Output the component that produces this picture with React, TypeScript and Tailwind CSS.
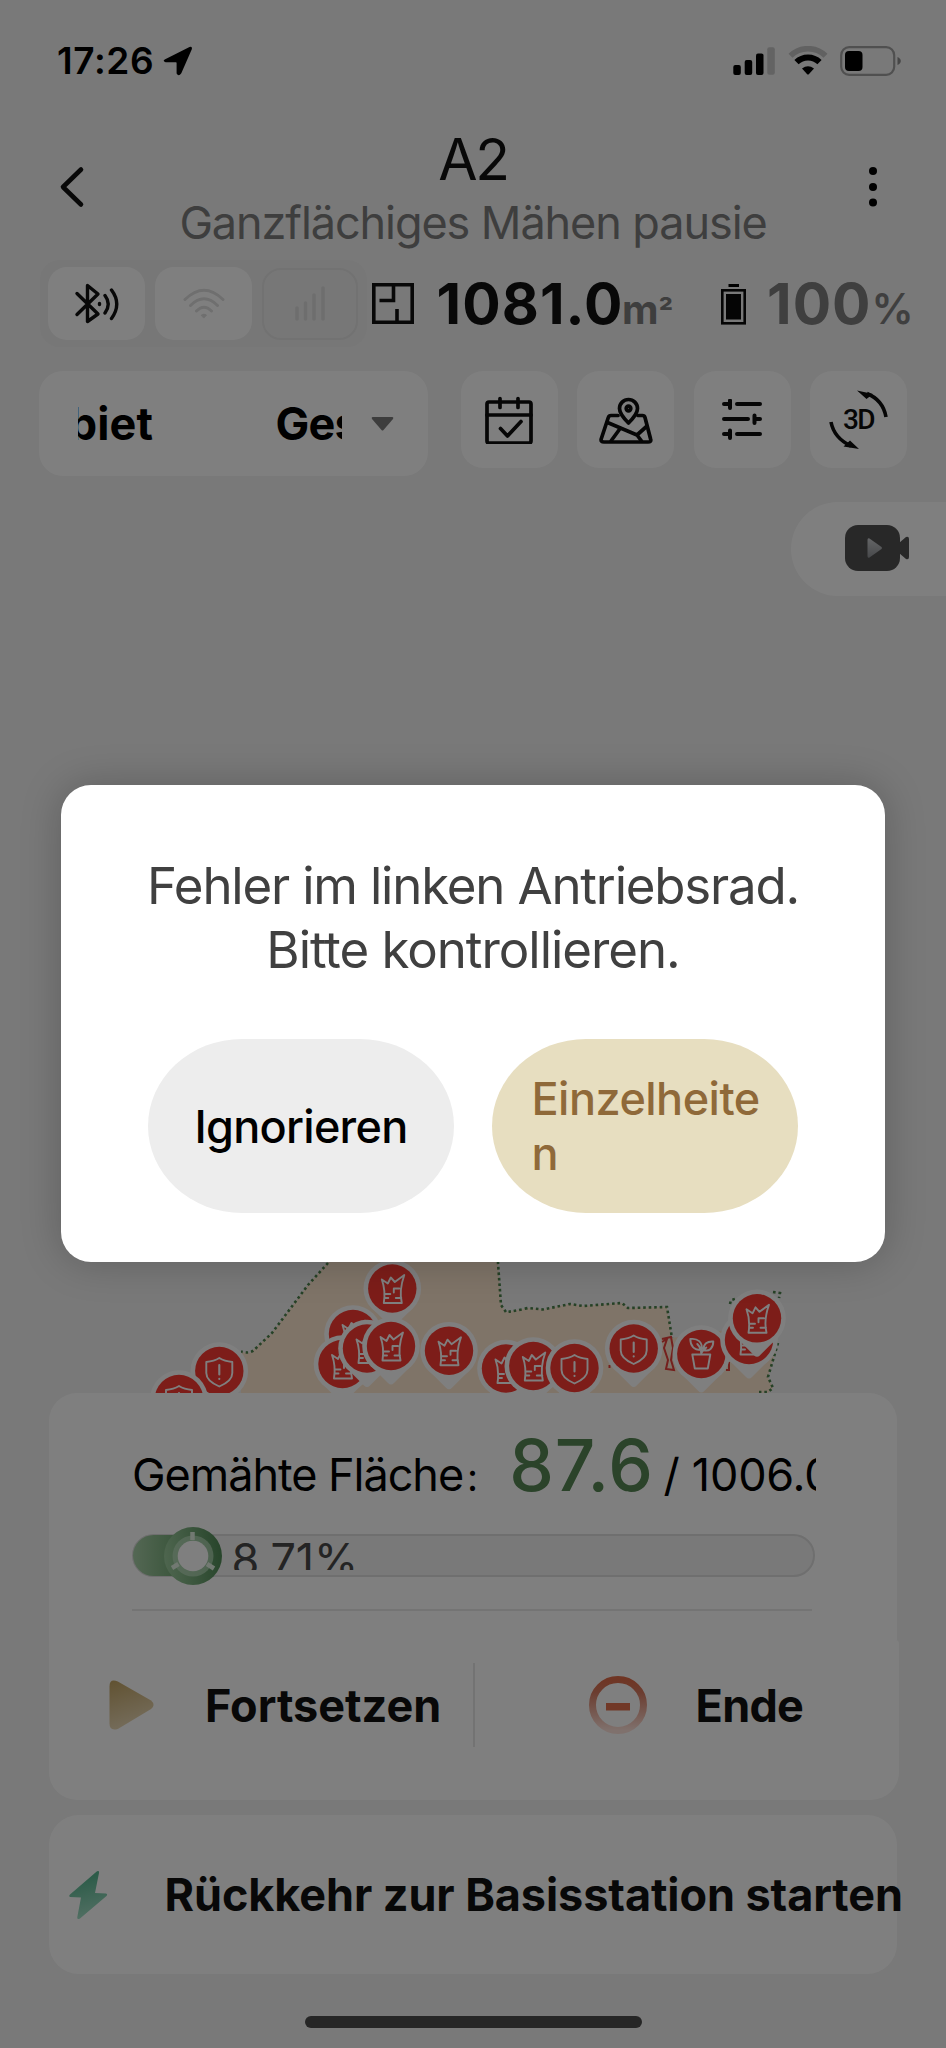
import type { ReactNode } from "react";

type MarkerKind = "grass" | "shield" | "plant";

const markers: { x: number; y: number; kind: MarkerKind }[] = [
  { x: 219.3, y: 1371, kind: "shield" },
  { x: 179, y: 1399, kind: "shield" },
  { x: 392.3, y: 1288.5, kind: "grass" },
  { x: 353, y: 1334, kind: "grass" },
  { x: 342.5, y: 1364, kind: "grass" },
  { x: 367, y: 1348.5, kind: "grass" },
  { x: 391, y: 1346, kind: "grass" },
  { x: 449, y: 1350.7, kind: "grass" },
  { x: 506, y: 1368.5, kind: "grass" },
  { x: 533.3, y: 1366, kind: "grass" },
  { x: 574.5, y: 1368, kind: "shield" },
  { x: 633.7, y: 1348.5, kind: "shield" },
  { x: 701.3, y: 1354, kind: "plant" },
  { x: 749, y: 1340, kind: "grass" },
  { x: 757, y: 1318.3, kind: "grass" },
];

function Marker({ x, y, kind }: { x: number; y: number; kind: MarkerKind }) {
  return (
    <g transform={`translate(${x} ${y})`}>
      <path d="M-20 20L-3 37Q0 40 3 37L20 20Z" fill="#fff" />
      <circle r="28.8" fill="#fff" />
      <circle r="24.2" fill="#fb3a32" />
      <g fill="none" stroke="#fff" strokeWidth="1.9" strokeLinejoin="round" strokeLinecap="round">
        {kind === "grass" && (
          <path d="M-8.5 14.5Q-6.5 2-10.5-9L-4.5-5L-1.5-11L2.5-6.5L12-13.5Q6.5 2 9.5 14.5ZM7 0H1.5V4M-8 5.5H-2M-8 9.5H-4M9 9.5H3.5" />
        )}
        {kind === "shield" && (
          <>
            <path d="M0-13C4-10.5 8-9.5 13-9V2C13 8.500 7 12.500 0 15.500C-7 12.500-13 8.500-13 2V-9C-8-9.500-4-10.500 0-13Z" />
            <path d="M0-6V3.500M0 7.800V8" strokeWidth="2.100" />
          </>
        )}
        {kind === "plant" && (
          <path d="M-9 0.5H9L6.500 14.500H-6.500ZM0 0C0-4-1-7-4-10M0-1C1-3 2-4 5-6.500M0-4C-8-4-11-9-11-15C-4-16 2-12 0-4ZM2-4C2-10 6-13 12-12.500C12-6 8-2 2-4Z" />
        )}
      </g>
    </g>
  );
}

function LawnMap() {
  const outline =
    "M500 1190L498 1263L501 1305L506 1312Q516 1311 528 1308L543 1309.500L570 1304L583 1306L622 1303L628 1308L667 1307L672 1338";
  return (
    <svg className="h-[797px] w-full shrink-0" viewBox="0 596 946 797">
      <path
        d="M380 1200L328 1262L308 1285L272 1333L250 1353L241 1352V1393H768L773 1388L768 1377L778 1343L760 1325L672 1338L667 1307L628 1308L622 1303L583 1306L570 1304L543 1309.500L528 1308L506 1312L501 1305L498 1263L500 1190Z"
        fill="#ffe8d1"
      />
      <g fill="none" stroke="#4c824c" strokeWidth="2.600" strokeDasharray="2.600 2.900">
        <path d="M328 1263L308 1285L272 1333L254 1350Q250 1354 241 1351.500" />
        <path d={outline} />
        <path d="M778 1343L768 1377L773 1388L768 1392L759 1392" />
        <path d="M730 1304L731 1300L735 1299M773 1292L780 1293L779 1298" />
      </g>
      <g fill="none" stroke="#e8403a" strokeWidth="2">
        <path d="M662 1339L671 1337L673 1348L671 1360L674 1370L666 1369L668 1360L664 1348L667 1339L662 1342M729 1362V1370H726M609.500 1365V1368" />
      </g>
      {markers.map((m, i) => (
        <Marker key={i} {...m} />
      ))}
    </svg>
  );
}

function StatusBar() {
  return (
    <div className="flex h-[121px] shrink-0 items-center pl-[57px] text-black">
      <span className="w-[106px] text-[37px] leading-none font-semibold tracking-[0.6px]">17:26</span>
      <svg className="h-[30px] w-[30px]" viewBox="0 0 30 30">
        <path d="M2.200 13.200L26.500 0.900Q29.500 0.100 28.800 3.200L18.300 27.200Q15.600 31 13.600 27.400V17Q13.600 16.300 13 16.300L2.600 16.200Q-1 14.900 2.200 13.200Z" />
      </svg>
      <svg className="ml-[540px] h-[28px] w-[43px]" viewBox="0 0 43 28">
        <rect x="0.300" y="18" width="7.500" height="10" rx="2" />
        <rect x="11.700" y="13" width="7.500" height="15" rx="2" />
        <rect x="23" y="6.500" width="7.500" height="21.500" rx="2" />
        <rect x="34.300" y="0.300" width="7.500" height="27.500" rx="2" fill="#c6c6c6" />
      </svg>
      <svg className="ml-[12px] h-[30px] w-[40px]" viewBox="0 0 40 30">
        <g fill="none">
          <path d="M2.500 9.800A25 25 0 0 1 37.500 9.800" stroke="#c2c2c2" strokeWidth="5.600" />
          <path d="M8.500 16.200A16.500 16.500 0 0 1 31.500 16.200" stroke="#000" strokeWidth="6" />
        </g>
        <path d="M14 22.500Q20 17.800 26 22.500L20.800 28.200Q20 29 19.200 28.200Z" />
      </svg>
      <svg className="ml-[12px] h-[30px] w-[62px]" viewBox="0 0 62 30">
        <rect x="1.200" y="1.200" width="53" height="27.600" rx="8" fill="none" stroke="#a0a0a0" strokeWidth="2.200" />
        <rect x="5" y="5" width="17.500" height="20" rx="4" />
        <path d="M57.500 11Q60.800 12.500 60.800 15T57.500 19Z" fill="#8c8c8c" />
      </svg>
    </div>
  );
}

function Header() {
  return (
    <div className="flex h-[132px] shrink-0 items-center">
      <svg className="ml-[58px] h-[44px] w-[28px]" viewBox="0 0 28 44">
        <path d="M23 4.500L5 22L23 39.500" fill="none" stroke="#111" strokeWidth="4.600" strokeLinecap="round" strokeLinejoin="round" />
      </svg>
      <div className="ml-[54px] flex w-[666px] flex-col items-center gap-[12px] pt-px leading-none whitespace-nowrap">
        <h1 className="text-[57px] tracking-[-2.3px] text-[#111]">A2</h1>
        <p className="text-[45px] tracking-[-1.08px] text-[#7c7c7c]">Ganzflächiges Mähen pausie</p>
      </div>
      <svg className="ml-[62px] h-[44px] w-[10px]" viewBox="0 0 10 44">
        <circle cx="5" cy="6" r="4" />
        <circle cx="5" cy="22" r="4" />
        <circle cx="5" cy="37.500" r="4" />
      </svg>
    </div>
  );
}

function StatsRow() {
  return (
    <div className="mt-[7px] ml-[40px] flex h-[87px] shrink-0 items-center whitespace-nowrap">
      <div className="flex h-[87px] w-[327px] shrink-0 items-center gap-[10px] rounded-[20px] bg-[#eeeeee] px-[8px]">
        <div className="flex h-[73px] w-[97px] items-center justify-center rounded-[19px] bg-white">
          <svg className="h-[42px] w-[46px]" viewBox="0 0 46 42" fill="none" stroke="#111" strokeWidth="3.400" strokeLinecap="round" strokeLinejoin="round">
            <path d="M3 10.500L24 31L13.500 38.500V2.500L24 11L3 31.500" />
            <path d="M25.500 20.500V21.500M31 12.500Q37.500 21 31 30M37.500 7Q48 21 37.500 35.500" />
          </svg>
        </div>
        <div className="flex h-[73px] w-[97px] items-center justify-center rounded-[19px] bg-white">
          <svg className="h-[32px] w-[42px]" viewBox="0 0 42 32" fill="none" stroke="#dedede" strokeWidth="3" strokeLinecap="round">
            <path d="M2 11.500Q21-7 40 11.500M7.500 17.500Q21 4 34.500 17.500M13.500 23Q21 15.500 28.500 23" />
            <path d="M18.500 27Q21 25.300 23.500 27L21 29.800Z" fill="#dedede" strokeWidth="1" />
          </svg>
        </div>
        <div className="flex h-[72px] w-[96px] items-center justify-center rounded-[19px] border-2 border-[#e4e4e4] bg-[#efefef]">
          <svg className="h-[35px] w-[30px]" viewBox="0 0 30 35" stroke="#dcdcdc" strokeWidth="3.600" strokeLinecap="round">
            <path d="M2 22V33M10.500 17V33M19 9V33M28 2V33" />
          </svg>
        </div>
      </div>
      <svg className="ml-[5px] h-[42px] w-[42px] shrink-0" viewBox="0 0 42 42" fill="none" stroke="#111" strokeWidth="3.600">
        <path d="M1.800 1.800H40.200V39.200H1.800Z" />
        <path d="M21.500 2V17.500H7.500M25 26V39" />
      </svg>
      <div className="ml-[22.500px] flex items-baseline leading-none font-bold">
        <span className="text-[57px] tracking-[1.1px] text-[#111]">1081.0</span>
        <span className="ml-[-1.500px] text-[40px] text-[#7c7c7c]">m</span>
        <span className="w-[14px] text-[32px] text-[#7c7c7c]">²</span>
      </div>
      <svg className="ml-[48px] h-[42px] w-[25px] shrink-0" viewBox="0 0 25 42">
        <path d="M7.500 1H18V4H7.500Z" />
        <rect x="1.300" y="7.300" width="22.400" height="33" fill="none" stroke="#0a0a0a" strokeWidth="2.600" />
        <rect x="5" y="11" width="15" height="25.500" fill="#0a0a0a" />
      </svg>
      <div className="ml-[21.500px] flex items-baseline leading-none font-bold text-[#7e7e7e]">
        <span className="text-[57px] tracking-[1px]">100</span>
        <span className="text-[42px] font-semibold">%</span>
      </div>
    </div>
  );
}

function ToolButton({ children }: { children: ReactNode }) {
  return (
    <button className="flex h-[97px] w-[97px] shrink-0 items-center justify-center rounded-[22px] bg-white">{children}</button>
  );
}

function Toolbar() {
  return (
    <div className="mt-[24px] ml-[39px] flex h-[105px] shrink-0 items-start gap-[19.500px]">
      <div className="mr-[13px] flex h-[105px] w-[389px] shrink-0 items-center rounded-[24px] bg-white pl-[39px]">
        <div className="flex w-[264px] items-center overflow-hidden text-[45px] leading-none font-bold whitespace-nowrap text-black">
          <div className="flex w-[75px] shrink-0 justify-end overflow-hidden py-1">
            <span className="tracking-[0.1px]">biet</span>
          </div>
          <span className="ml-[122.500px] tracking-[-0.8px]">Ges</span>
        </div>
        <svg className="ml-[29px] h-[14px] w-[23px]" viewBox="0 0 23 14">
          <path d="M1.500 0H21.500Q23 0.500 22 2L12.500 13Q11.500 14 10.500 13L1 2Q0 0.500 1.500 0Z" fill="#7a7a7a" />
        </svg>
      </div>
      <ToolButton>
        <svg className="h-[48px] w-[48px]" viewBox="0 0 48 48" fill="none" stroke="#0c0c0c" strokeWidth="3.700" strokeLinecap="round" strokeLinejoin="round">
          <rect x="2" y="6" width="44" height="41" rx="2" />
          <path d="M2 19H46M15 2.500V11.500M33 2.500V11.500M15.500 32.500L22.500 40L36 25.500" />
        </svg>
      </ToolButton>
      <ToolButton>
        <svg className="h-[48px] w-[54px]" viewBox="0 0 54 48" fill="none" stroke="#0c0c0c" strokeWidth="3.700" strokeLinejoin="round" strokeLinecap="round">
          <path d="M19 19.500H12Q10 19.500 9.300 21.500L2.200 43Q1.500 46 5 46H49Q52.500 46 51.600 43L46 21.500Q45.400 19.500 43.500 19.500H39" />
          <path d="M29.500 27Q20.500 18 20.500 12.500A9 9 0 0 1 38.500 12.500Q38.500 18 29.500 27Z" />
          <circle cx="29.500" cy="12.500" r="2.300" />
          <path d="M8.500 26.500L38 39L47.500 30.500M21.500 32L12 45M38 39L42.500 45" />
        </svg>
      </ToolButton>
      <ToolButton>
        <svg className="h-[42px] w-[40px]" viewBox="0 0 40 42" stroke="#0c0c0c" strokeWidth="4" strokeLinecap="round">
          <path d="M2 5H7M15 5H38M8 1.500V9M2 20H26M34 20H38M32.500 16.500V24M2 35H7M15 35H38M8 31.500V39" />
        </svg>
      </ToolButton>
      <ToolButton>
        <div className="relative flex h-[60px] w-[60px] items-center justify-center">
          <svg className="absolute inset-0 h-[60px] w-[60px]" viewBox="0 0 60 60" fill="none" stroke="#0c0c0c" strokeWidth="3.600">
            <path d="M38 3.500Q54 10 57 27M2 32Q5 48 22 56" />
            <path d="M28 0.500L44 4L37.500 9ZM30 59L14.500 56.500L21 50.500Z" fill="#0c0c0c" stroke="none" />
          </svg>
          <span className="font-['Roboto'] text-[28px] leading-none font-medium tracking-[-1.5px] text-[#0c0c0c]">3D</span>
        </div>
      </ToolButton>
    </div>
  );
}

function VideoTab() {
  return (
    <div className="mt-[26px] flex h-[94px] w-[155px] shrink-0 items-center self-end rounded-l-full bg-white pl-[54px]">
      <svg className="mb-[2px] h-[46px] w-[64px]" viewBox="0 0 64 46">
        <defs>
          <linearGradient id="play" x1="0" y1="0" x2="0" y2="1">
            <stop offset="0" stopColor="#c9cbce" />
            <stop offset="1" stopColor="#8f9296" />
          </linearGradient>
        </defs>
        <path d="M54 18L61 12Q64 11 64 14V32Q64 35 61 34L54 28Z" fill="#505050" />
        <rect width="55" height="46" rx="13" fill="#505050" />
        <path d="M22.500 15Q22.500 12.500 24.500 13.500L36.500 22Q37.500 23 36.500 24L24.500 32.500Q22.500 33.500 22.500 31Z" fill="url(#play)" />
      </svg>
    </div>
  );
}

function ProgressCard() {
  return (
    <section className="ml-[49px] shrink-0">
      <div className="h-[247px] w-[848px] rounded-t-[28px] bg-white px-[83px] pt-[37px]">
        <div className="flex h-[71px] w-[684px] items-baseline overflow-hidden leading-none whitespace-nowrap text-black">
          <span className="text-[45px] tracking-[-1.03px]">Gemähte Fläche</span>
          <span className="w-[46px] shrink-0 pl-[4px] font-['Noto_Sans_CJK_SC',sans-serif] text-[38px] leading-none">:</span>
          <span className="text-[71px] font-medium tracking-[1px] text-[#568654]">87.6</span>
          <span className="ml-[9.500px] text-[45px] tracking-[-0.2px]">/ 1006.0</span>
        </div>
        <div className="relative mt-[33px] h-[43px] w-[683px] rounded-full border-2 border-[#dedede] bg-[#f2f2f2]">
          <div className="absolute -top-px -left-px h-[41px] w-[62px] rounded-l-full bg-linear-to-r from-[#a8cfa8] to-[#5f9c63]" />
          <div className="absolute top-[1px] left-[97.500px] h-[33px] overflow-hidden text-[45px] leading-none tracking-[-0.1px] text-[#484848]">8.71%</div>
          <svg className="absolute top-[-10.500px] left-[28.500px] h-[60px] w-[60px]" viewBox="0 0 60 60">
            <defs>
              <linearGradient id="knob" x1="0" y1="0.500" x2="1" y2="0.400">
                <stop offset="0" stopColor="#9ccb9d" />
                <stop offset="1" stopColor="#4f8a56" />
              </linearGradient>
            </defs>
            <circle cx="30" cy="30" r="29" fill="url(#knob)" />
            <circle cx="30" cy="30" r="20.500" fill="#bfe0c1" opacity="0.650" />
            <circle cx="30" cy="30" r="15.300" fill="#fff" />
            <path d="M29.500 6V14M9 42L15.500 38M51 42.500L44 38" stroke="#e4f2e4" strokeWidth="4.500" />
          </svg>
        </div>
        <div className="mt-[32px] h-[2px] w-[680px] bg-[#e9e9e9]" />
      </div>
      <div className="flex h-[160px] w-[850px] items-start rounded-tr-[4px] rounded-b-[28px] bg-white pt-[23px] text-[45px] leading-none font-bold whitespace-nowrap text-[#111]">
        <button className="flex h-[84px] w-[426px] items-center border-r-2 border-[#e6e6e6] pl-[59.500px]">
          <svg className="h-[52px] w-[46px]" viewBox="0 0 47 52">
            <defs>
              <linearGradient id="resume" x1="0" y1="0" x2="0.300" y2="1">
                <stop offset="0" stopColor="#c2a463" />
                <stop offset="1" stopColor="#ead9b6" />
              </linearGradient>
            </defs>
            <path d="M0.500 7Q0.500-1.500 9 2L43 21.500Q48 26 43 30L9 50.500Q0.500 53 0.500 45Z" fill="url(#resume)" />
          </svg>
          <span className="ml-[50.500px]">Fortsetzen</span>
        </button>
        <button className="flex h-[84px] items-center pl-[114px]">
          <svg className="h-[58px] w-[58px]" viewBox="0 0 58 58">
            <defs>
              <linearGradient id="stop" x1="0" y1="0" x2="0" y2="1">
                <stop offset="0" stopColor="#de6b48" />
                <stop offset="0.250" stopColor="#d77a60" />
                <stop offset="1" stopColor="#ffe2da" />
              </linearGradient>
            </defs>
            <circle cx="29" cy="29" r="25.500" fill="none" stroke="url(#stop)" strokeWidth="7" />
            <path d="M17 27H41V34.500H17Z" fill="#e2704e" />
          </svg>
          <span className="ml-[48.500px] tracking-[-0.7px]">Ende</span>
        </button>
      </div>
    </section>
  );
}

function ReturnCard() {
  return (
    <button className="mt-[15px] ml-[49px] flex h-[159px] w-[848px] shrink-0 items-center rounded-[30px] bg-white pl-[19px] text-[#111]">
      <svg className="h-[50px] w-[40px] shrink-0" viewBox="0 0 40 50">
        <defs>
          <linearGradient id="bolt" x1="0.300" y1="0" x2="0.500" y2="1">
            <stop offset="0.150" stopColor="#5ab892" />
            <stop offset="1" stopColor="#a5e0c8" />
          </linearGradient>
        </defs>
        <path d="M29 1.300Q31.500 0.300 31 3L27 23L38 23.500Q40 24.500 38.500 26L12 48.500Q8.500 50.500 9.500 46L13 27.500L2 27Q0.500 26 2 24.500Z" fill="url(#bolt)" />
      </svg>
      <span className="ml-[56.500px] text-[45px] leading-none font-bold tracking-[-0.09px] whitespace-nowrap">
        Rückkehr zur Basisstation starten
      </span>
    </button>
  );
}

function ErrorDialog() {
  return (
    <div className="absolute inset-0 flex items-start justify-center bg-black/50 pt-[785px]">
      <div role="dialog" className="h-[477px] w-[824px] rounded-[30px] bg-white px-[87px] pt-[68.500px] shadow-[0_0_40px_rgba(0,0,0,0.220)]">
        <p className="flex flex-col items-center text-[51px] leading-[64px] whitespace-nowrap text-[#404040]">
          <span className="tracking-[-1.2px]">Fehler im linken Antriebsrad.</span>
          <span className="tracking-[-1.05px]">Bitte kontrollieren.</span>
        </p>
        <div className="mt-[57.500px] flex gap-[38px] text-[45px] leading-[55px] font-medium">
          <button className="flex h-[174px] w-[306px] items-center justify-center rounded-[94px/87px] bg-[#ededed] tracking-[-0.720px] text-black">
            Ignorieren
          </button>
          <button className="flex h-[174px] w-[306px] flex-col items-start justify-center rounded-[94px/87px] bg-[#e7dec0] pl-[39.500px] tracking-[-0.520px] text-[#8f6939]">
            <span>Einzelheite</span>
            <span>n</span>
          </button>
        </div>
      </div>
    </div>
  );
}

export default function App() {
  return (
    <main className="relative flex h-[2048px] w-[946px] flex-col overflow-hidden bg-[#f2f2f2] font-['Inter',sans-serif]">
      <StatusBar />
      <Header />
      <StatsRow />
      <Toolbar />
      <VideoTab />
      <LawnMap />
      <ProgressCard />
      <ReturnCard />
      <div className="mt-[42px] ml-[305px] h-[12px] w-[337px] shrink-0 rounded-full bg-[#4c4c4c]" />
      <ErrorDialog />
    </main>
  );
}
